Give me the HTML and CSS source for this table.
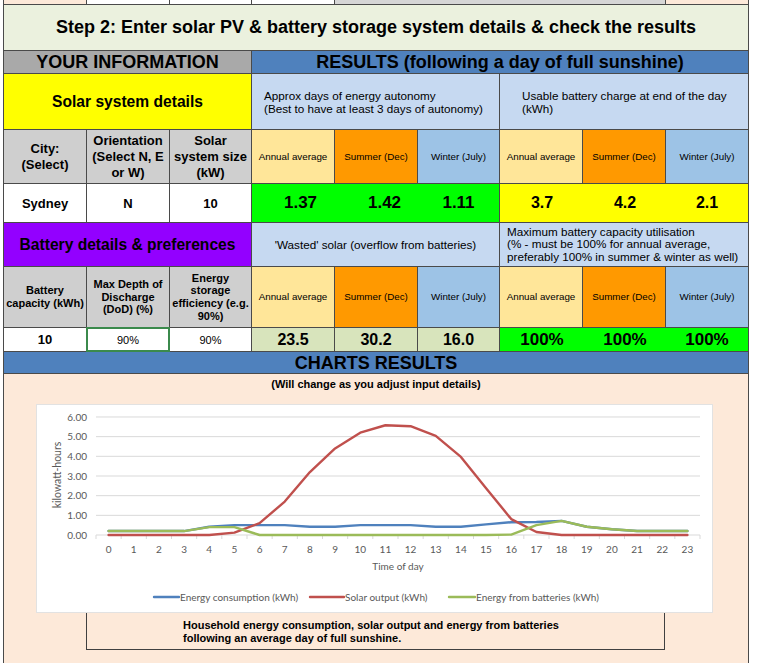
FILE: index.html
```html
<!DOCTYPE html>
<html>
<head>
<meta charset="utf-8">
<title>Solar PV &amp; battery storage</title>
<link rel="stylesheet" href="styles.css">
</head>
<body>
<div class="sheet">
  <div class="c peach"></div>
  <div class="c"></div>
  <div class="c"></div>
  <div class="c"></div>
  <div class="c strip-gray span4"></div>
  <div class="c peach"></div>

  <div class="c title span9">Step 2: Enter solar PV &amp; battery storage system details &amp; check the results</div>

  <div class="c band info span3">YOUR INFORMATION</div>
  <div class="c band results span6">RESULTS (following a day of full sunshine)</div>

  <div class="c section solar span3">Solar system details</div>
  <div class="c desc span3">Approx days of energy autonomy<br>(Best to have at least 3 days of autonomy)</div>
  <div class="c desc desc-b span3">Usable battery charge at end of the day<br>(kWh)</div>

  <div class="c head">City:<br>(Select)</div>
  <div class="c head">Orientation<br>(Select N, E<br>or W)</div>
  <div class="c head">Solar<br>system size<br>(kW)</div>
  <div class="c small annual">Annual average</div>
  <div class="c small summer">Summer (Dec)</div>
  <div class="c small winter">Winter (July)</div>
  <div class="c small annual">Annual average</div>
  <div class="c small summer">Summer (Dec)</div>
  <div class="c small winter">Winter (July)</div>

  <div class="c val">Sydney</div>
  <div class="c val">N</div>
  <div class="c val">10</div>
  <div class="c trio green span3"><span class="t1">1.37</span><span class="t2">1.42</span><span>1.11</span></div>
  <div class="c trio yellow mid span3"><span>3.7</span><span>4.2</span><span>2.1</span></div>

  <div class="c section battery span3">Battery details &amp; preferences</div>
  <div class="c desc desc-center span3">'Wasted' solar (overflow from batteries)</div>
  <div class="c desc desc-c span3">Maximum battery capacity utilisation<br>(% - must be 100% for annual average,<br>preferably 100% in summer &amp; winter as well)</div>

  <div class="c head head-s">Battery<br>capacity (kWh)</div>
  <div class="c head head-s">Max Depth of<br>Discharge<br>(DoD) (%)</div>
  <div class="c head head-s">Energy<br>storage<br>efficiency (e.g.<br>90%)</div>
  <div class="c small annual">Annual average</div>
  <div class="c small summer">Summer (Dec)</div>
  <div class="c small winter">Winter (July)</div>
  <div class="c small annual">Annual average</div>
  <div class="c small summer">Summer (Dec)</div>
  <div class="c small winter">Winter (July)</div>

  <div class="c val">10</div>
  <div class="c pct selected">90%</div>
  <div class="c pct">90%</div>
  <div class="c mid lightgreen">23.5</div>
  <div class="c mid lightgreen">30.2</div>
  <div class="c mid lightgreen">16.0</div>
  <div class="c trio green big span3"><span>100%</span><span>100%</span><span>100%</span></div>

  <div class="c band charts span9">CHARTS RESULTS</div>

  <div class="panel span9">
    <div class="subtitle">(Will change as you adjust input details)</div>
    <div class="chart">
      <svg width="677" height="209" viewBox="0 0 677 209" xmlns="http://www.w3.org/2000/svg">
        <g class="grid">
          <line x1="60" y1="12.98" x2="664" y2="12.98"/>
          <line x1="60" y1="32.65" x2="664" y2="32.65"/>
          <line x1="60" y1="52.32" x2="664" y2="52.32"/>
          <line x1="60" y1="72" x2="664" y2="72"/>
          <line x1="60" y1="91.66" x2="664" y2="91.66"/>
          <line x1="60" y1="111.33" x2="664" y2="111.33"/>
          <line x1="60" y1="131" x2="664" y2="131"/>
        </g>
        <g class="ticks">
          <line x1="60" y1="131" x2="60" y2="135"/>
          <line x1="85.17" y1="131" x2="85.17" y2="135"/>
          <line x1="110.33" y1="131" x2="110.33" y2="135"/>
          <line x1="135.5" y1="131" x2="135.5" y2="135"/>
          <line x1="160.67" y1="131" x2="160.67" y2="135"/>
          <line x1="185.83" y1="131" x2="185.83" y2="135"/>
          <line x1="211" y1="131" x2="211" y2="135"/>
          <line x1="236.17" y1="131" x2="236.17" y2="135"/>
          <line x1="261.33" y1="131" x2="261.33" y2="135"/>
          <line x1="286.5" y1="131" x2="286.5" y2="135"/>
          <line x1="311.67" y1="131" x2="311.67" y2="135"/>
          <line x1="336.83" y1="131" x2="336.83" y2="135"/>
          <line x1="362" y1="131" x2="362" y2="135"/>
          <line x1="387.17" y1="131" x2="387.17" y2="135"/>
          <line x1="412.33" y1="131" x2="412.33" y2="135"/>
          <line x1="437.5" y1="131" x2="437.5" y2="135"/>
          <line x1="462.67" y1="131" x2="462.67" y2="135"/>
          <line x1="487.83" y1="131" x2="487.83" y2="135"/>
          <line x1="513" y1="131" x2="513" y2="135"/>
          <line x1="538.17" y1="131" x2="538.17" y2="135"/>
          <line x1="563.33" y1="131" x2="563.33" y2="135"/>
          <line x1="588.5" y1="131" x2="588.5" y2="135"/>
          <line x1="613.67" y1="131" x2="613.67" y2="135"/>
          <line x1="638.83" y1="131" x2="638.83" y2="135"/>
          <line x1="664" y1="131" x2="664" y2="135"/>
        </g>
        <g class="ylab">
          <text x="51" y="16.5">6.00</text>
          <text x="51" y="36.2">5.00</text>
          <text x="51" y="55.8">4.00</text>
          <text x="51" y="75.5">3.00</text>
          <text x="51" y="95.2">2.00</text>
          <text x="51" y="114.8">1.00</text>
          <text x="51" y="134.5">0.00</text>
        </g>
        <text class="ytitle" transform="translate(25 71) rotate(-90)">kilowatt-hours</text>
        <g class="xlab">
          <text x="72.58" y="148.5">0</text>
          <text x="97.75" y="148.5">1</text>
          <text x="122.92" y="148.5">2</text>
          <text x="148.08" y="148.5">3</text>
          <text x="173.25" y="148.5">4</text>
          <text x="198.42" y="148.5">5</text>
          <text x="223.58" y="148.5">6</text>
          <text x="248.75" y="148.5">7</text>
          <text x="273.92" y="148.5">8</text>
          <text x="299.08" y="148.5">9</text>
          <text x="324.25" y="148.5">10</text>
          <text x="349.42" y="148.5">11</text>
          <text x="374.58" y="148.5">12</text>
          <text x="399.75" y="148.5">13</text>
          <text x="424.92" y="148.5">14</text>
          <text x="450.08" y="148.5">15</text>
          <text x="475.25" y="148.5">16</text>
          <text x="500.42" y="148.5">17</text>
          <text x="525.58" y="148.5">18</text>
          <text x="550.75" y="148.5">19</text>
          <text x="575.92" y="148.5">20</text>
          <text x="601.08" y="148.5">21</text>
          <text x="626.25" y="148.5">22</text>
          <text x="651.42" y="148.5">23</text>
          <text x="362" y="165.5">Time of day</text>
        </g>
        <polyline class="s-blue" points="72.58,127.07 97.75,127.07 122.92,127.07 148.08,127.07 173.25,122.74 198.42,121.17 223.58,121.17 248.75,121.17 273.92,122.74 299.08,122.74 324.25,121.17 349.42,121.17 374.58,121.17 399.75,122.74 424.92,122.74 450.08,120.38 475.25,118.21 500.42,118.02 525.58,116.84 550.75,122.74 575.92,125.3 601.08,127.07 626.25,127.07 651.42,127.07"/>
        <polyline class="s-red" points="72.58,131 97.75,131 122.92,131 148.08,131 173.25,131 198.42,128.64 223.58,119.2 248.75,97.56 273.92,68.06 299.08,44.45 324.25,28.72 349.42,21.24 374.58,22.22 399.75,31.86 424.92,52.91 450.08,84.19 475.25,115.07 500.42,128.05 525.58,131 550.75,131 575.92,131 601.08,131 626.25,131 651.42,131"/>
        <polyline class="s-green" points="72.58,127.07 97.75,127.07 122.92,127.07 148.08,127.07 173.25,123.13 198.42,123.13 223.58,131 248.75,131 273.92,131 299.08,131 324.25,131 349.42,131 374.58,131 399.75,131 424.92,131 450.08,131 475.25,130.6 500.42,121.17 525.58,116.84 550.75,122.74 575.92,125.3 601.08,127.07 626.25,127.07 651.42,127.07"/>
        <g class="legend">
          <line class="s-blue" x1="118" y1="193" x2="143" y2="193"/>
          <text x="144" y="196.5">Energy consumption (kWh)</text>
          <line class="s-red" x1="274" y1="193" x2="308" y2="193"/>
          <text x="309" y="196.5">Solar output (kWh)</text>
          <line class="s-green" x1="413" y1="193" x2="439" y2="193"/>
          <text x="440" y="196.5">Energy from batteries (kWh)</text>
        </g>
      </svg>
    </div>
    <div class="caption">Household energy consumption, solar output and energy from batteries<br>following an average day of full sunshine.</div>
  </div>
</div>
</body>
</html>
```

FILE: styles.css
```css
* { box-sizing: border-box; }
html, body { margin: 0; padding: 0; background: #ffffff; }
body {
  font-family: "Liberation Sans", Arial, sans-serif;
  color: #000;
  overflow: hidden;
}

.sheet {
  display: grid;
  grid-template-columns: 82px 82px 81px 82px 82px 81px 82px 82px 82px;
  grid-template-rows: 4px 45px 22px 55px 53px 38px 43px 60px 23px 21px 289px;
  gap: 1px;
  padding: 0 1px;
  margin-left: 3px;
  width: 746px;
  background: #4a4a4a;
}

.c {
  display: flex;
  align-items: center;
  justify-content: center;
  text-align: center;
  background: #ffffff;
  overflow: hidden;
}

.span3 { grid-column: span 3; }
.span4 { grid-column: span 4; }
.span6 { grid-column: span 6; }
.span9 { grid-column: span 9; }

.peach { background: #fde9d9; }
.strip-gray { background: #d6d6d6; }

.title {
  background: #ebf1de;
  font-weight: bold;
  font-size: 18px;
}

.band {
  font-weight: bold;
  font-size: 18px;
  line-height: 20px;
}
.info { background: #a9a9a9; }
.results { background: #4f81bd; }
.charts { background: #4f81bd; }

.section {
  font-weight: bold;
  font-size: 15.6px;
}
.solar { background: #ffff00; }
.battery { background: #9300ff; }

.desc {
  background: #c6d9f1;
  justify-content: flex-start;
  text-align: left;
  font-size: 11.7px;
  line-height: 13px;
  padding-left: 12px;
}
.desc-b { padding-left: 22px; }
.desc-c { padding-left: 7px; line-height: 12.3px; }
.desc-center { justify-content: center; text-align: center; padding-left: 0; }

.head {
  background: #cfcfcf;
  font-weight: bold;
  font-size: 13px;
  line-height: 16px;
}
.head-s {
  font-size: 11px;
  line-height: 12.7px;
}

.small {
  font-size: 9.8px;
  line-height: 12px;
}
.annual { background: #ffe699; }
.summer { background: #ff9900; }
.winter { background: #9dc3e6; }

.val {
  font-weight: bold;
  font-size: 13px;
}
.pct {
  font-size: 11px;
}
.selected {
  outline: 2px solid #3b8a4c;
  outline-offset: -1px;
  position: relative;
  z-index: 1;
}

.mid {
  font-weight: bold;
  font-size: 16px;
}
.lightgreen { background: #d8e4bc; }

.trio {
  display: grid;
  grid-template-columns: 83px 83px 81px;
  align-items: center;
  justify-items: center;
  font-weight: bold;
  font-size: 17px;
}
.trio.mid { font-size: 16px; }
.green { background: #00ff00; }
.yellow { background: #ffff00; }
.t1 { padding-left: 14px; }
.t2 { padding-left: 16px; }

.panel {
  background: #fde9d9;
  display: flex;
  flex-direction: column;
}
.subtitle {
  font-weight: bold;
  font-size: 11px;
  line-height: 13px;
  text-align: center;
  padding-top: 4px;
}
.chart {
  margin: 13px 0 0 32px;
  width: 677px;
  height: 209px;
  background: #ffffff;
  border: 1px solid #e2e2e2;
  position: relative;
  z-index: 1;
}
.chart svg {
  display: block;
  margin: -1px 0 0 -1px;
  font-family: Lato, "Noto Sans", sans-serif;
}
.grid line { stroke: #d9d9d9; stroke-width: 1; }
.ticks line { stroke: #d9d9d9; stroke-width: 1; }
.ylab text { font-size: 10px; fill: #595959; text-anchor: end; }
.xlab text { font-size: 10px; fill: #595959; text-anchor: middle; }
.ytitle { font-size: 10.5px; fill: #595959; text-anchor: middle; }
.legend text { font-size: 10px; fill: #595959; }
polyline, .legend line { fill: none; stroke-width: 2.4; stroke-linejoin: round; stroke-linecap: round; }
.s-blue { stroke: #4f81bd; }
.s-red { stroke: #c0504d; }
.s-green { stroke: #9bbb59; }

.caption {
  margin-left: 82px;
  width: 579px;
  height: 37px;
  border: 1px solid #404040;
  border-top: none;
  padding: 6px 0 0 96px;
  font-weight: bold;
  font-size: 11px;
  line-height: 13px;
}
```
